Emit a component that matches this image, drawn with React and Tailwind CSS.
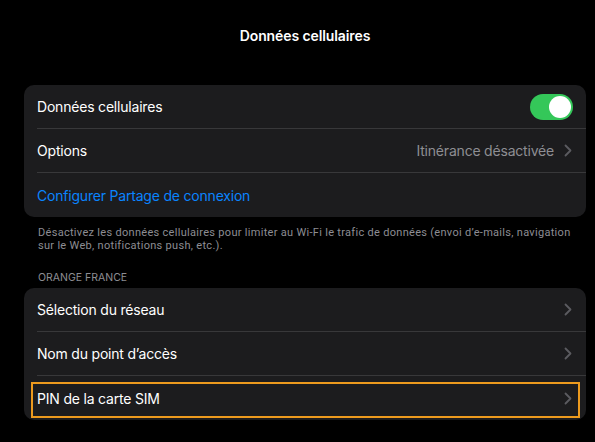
function Row({ children, right, divider = true, focused = false }) {
  return (
    <div className="relative flex h-[44px] items-center pl-[13px]">
      <div className={`flex h-full flex-1 items-center pr-[13px] ${divider ? 'border-b border-[#38383a]' : ''}`}>
        <div className="flex-1">{children}</div>
        {right}
      </div>
      {focused && (
        <div className="absolute top-[6px] bottom-[2px] left-[7px] right-[6px] border-2 border-[#ec9a1e]" />
      )}
    </div>
  );
}

function Chevron() {
  return (
    <svg width="8" height="13" viewBox="0 0 8 13" fill="none" className="mr-px">
      <path d="M1.5 1.5 L6.5 6.5 L1.5 11.5" stroke="#5b5b60" strokeWidth="1.8" strokeLinecap="round" strokeLinejoin="round" />
    </svg>
  );
}

export default function App() {
  return (
    <div
      className="h-[442px] w-[595px] overflow-hidden bg-black pl-[24px] pr-[9px] text-white"
      style={{ fontFamily: 'Inter, "Liberation Sans", sans-serif' }}
    >
      {/* Header */}
      <div className="flex h-[85px] items-start justify-center pt-[25px]">
        <h1 className="text-[14px] font-semibold tracking-[-0.1px]">Données cellulaires</h1>
      </div>

      {/* Card 1 */}
      <div className="overflow-hidden rounded-[10px] bg-[#1c1c1e] text-[14px] tracking-[-0.2px]">
        <Row
          right={
            <div className="flex h-[26px] w-[43px] items-center justify-end rounded-full bg-[#34c759] p-[2px]">
              <div className="h-[22px] w-[22px] rounded-full bg-white" />
            </div>
          }
        >
          Données cellulaires
        </Row>
        <Row
          right={
            <div className="flex items-center gap-[10px] text-[#8e8e93]">
              <span>Itinérance désactivée</span>
              <Chevron />
            </div>
          }
        >
          Options
        </Row>
        <Row divider={false}>
          <span className="text-[#0a84ff]">Configurer Partage de connexion</span>
        </Row>
      </div>

      {/* Footer note */}
      <p
        className="px-[14px] pt-[9px] text-[11px] leading-[13px] tracking-[0.3px] text-[#8d8d93]"
        style={{ fontFamily: 'Roboto, "Liberation Sans", sans-serif' }}
      >
        Désactivez les données cellulaires pour limiter au Wi-Fi le trafic de données (envoi d’e-mails, navigation sur le Web, notifications push, etc.).
      </p>

      <div className="px-[14px] pt-[19px] pb-[4px] text-[10.5px] uppercase leading-[13px] text-[#8d8d93]">
        Orange France
      </div>

      {/* Card 2 */}
      <div className="overflow-hidden rounded-[10px] bg-[#1c1c1e] text-[14px] tracking-[-0.2px]">
        <Row right={<Chevron />}>Sélection du réseau</Row>
        <Row right={<Chevron />}>Nom du point d’accès</Row>
        <Row right={<Chevron />} divider={false} focused>
          PIN de la carte SIM
        </Row>
      </div>
    </div>
  );
}
